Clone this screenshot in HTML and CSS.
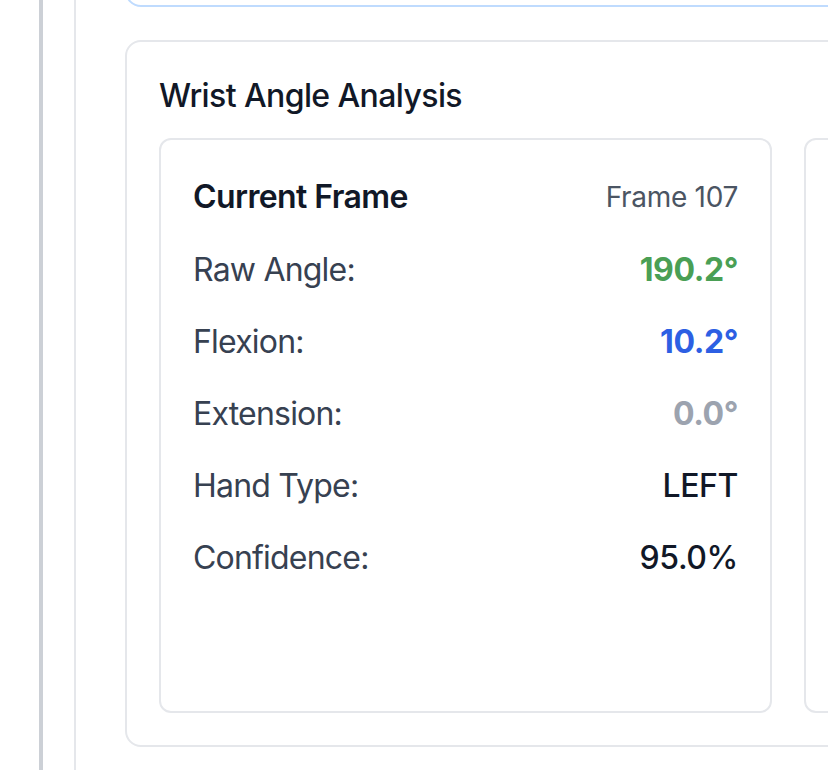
FILE: index.html
```html
<!DOCTYPE html>
<html lang="en">
<head>
<meta charset="utf-8">
<title>Wrist Angle Analysis</title>
<link rel="stylesheet" href="styles.css">
</head>
<body>
<div class="frame">
  <div class="edge">
    <div class="panel">
      <div class="stack">
        <div class="prev-card"></div>
        <section class="card">
          <h2 class="card-title">Wrist Angle Analysis</h2>
          <div class="grid">
            <div class="stat-card">
              <div class="stat-head">
                <h3 class="stat-title">Current Frame</h3>
                <span class="stat-meta">Frame 107</span>
              </div>
              <div class="rows">
                <div class="row"><span class="label">Raw Angle:</span><span class="value value-green">190.2°</span></div>
                <div class="row"><span class="label">Flexion:</span><span class="value value-blue">10.2°</span></div>
                <div class="row"><span class="label">Extension:</span><span class="value value-muted">0.0°</span></div>
                <div class="row"><span class="label">Hand Type:</span><span class="value value-plain">LEFT</span></div>
                <div class="row"><span class="label">Confidence:</span><span class="value value-plain">95.0%</span></div>
              </div>
            </div>
            <div class="stat-card"></div>
          </div>
        </section>
      </div>
    </div>
  </div>
</div>
</body>
</html>
```

FILE: styles.css
```css
*, *::before, *::after {
  box-sizing: border-box;
}

html, body {
  margin: 0;
  padding: 0;
  background: #ffffff;
  overflow: hidden;
}

body {
  font-family: Inter, "Noto Sans", "Liberation Sans", sans-serif;
  color: #111827;
}

.frame {
  padding-left: 39px;
  height: 770px;
}

.edge {
  border-left: 4px solid #ccd0d6;
  padding-left: 31px;
  height: 100%;
}

.panel {
  border-left: 2px solid #e5e7eb;
  padding-left: 49px;
  height: 100%;
}

.stack {
  display: flex;
  flex-direction: column;
  gap: 33px;
  width: 1400px;
}

.prev-card {
  height: 100px;
  margin-top: -93px;
  border: 2px solid #bfdbfe;
  border-radius: 16px;
  background: #ffffff;
}

.card {
  border: 2px solid #e5e7eb;
  border-radius: 16px;
  padding: 32px;
  background: #ffffff;
  width: 1326px;
}

.card-title {
  margin: 2px 0 22px 0;
  font-size: 32px;
  line-height: 40px;
  font-weight: 500;
  letter-spacing: -0.6px;
  color: #111827;
}

.grid {
  display: grid;
  grid-template-columns: 613px 613px;
  gap: 32px;
}

.stat-card {
  border: 2px solid #e5e7eb;
  border-radius: 12px;
  padding: 33px 32px 32px 32px;
  min-height: 575px;
}

.stat-head {
  display: flex;
  justify-content: space-between;
  align-items: center;
  margin-bottom: 25px;
}

.stat-title {
  margin: 0;
  font-size: 32px;
  line-height: 48px;
  font-weight: 600;
  letter-spacing: -0.6px;
  color: #111827;
}

.stat-meta {
  font-size: 28px;
  line-height: 40px;
  letter-spacing: -0.3px;
  color: #4b5563;
}

.rows {
  display: flex;
  flex-direction: column;
  gap: 24px;
}

.row {
  display: flex;
  justify-content: space-between;
  align-items: center;
  font-size: 32px;
  line-height: 48px;
  letter-spacing: -0.8px;
}

.label {
  color: #374151;
}

.value {
  font-weight: 700;
  letter-spacing: -0.4px;
}

.value-green { color: #4a9f55; }
.value-blue { color: #2d5fe3; }
.value-muted { color: #9ca3af; }
.value-plain { color: #111827; font-weight: 500; }
```
